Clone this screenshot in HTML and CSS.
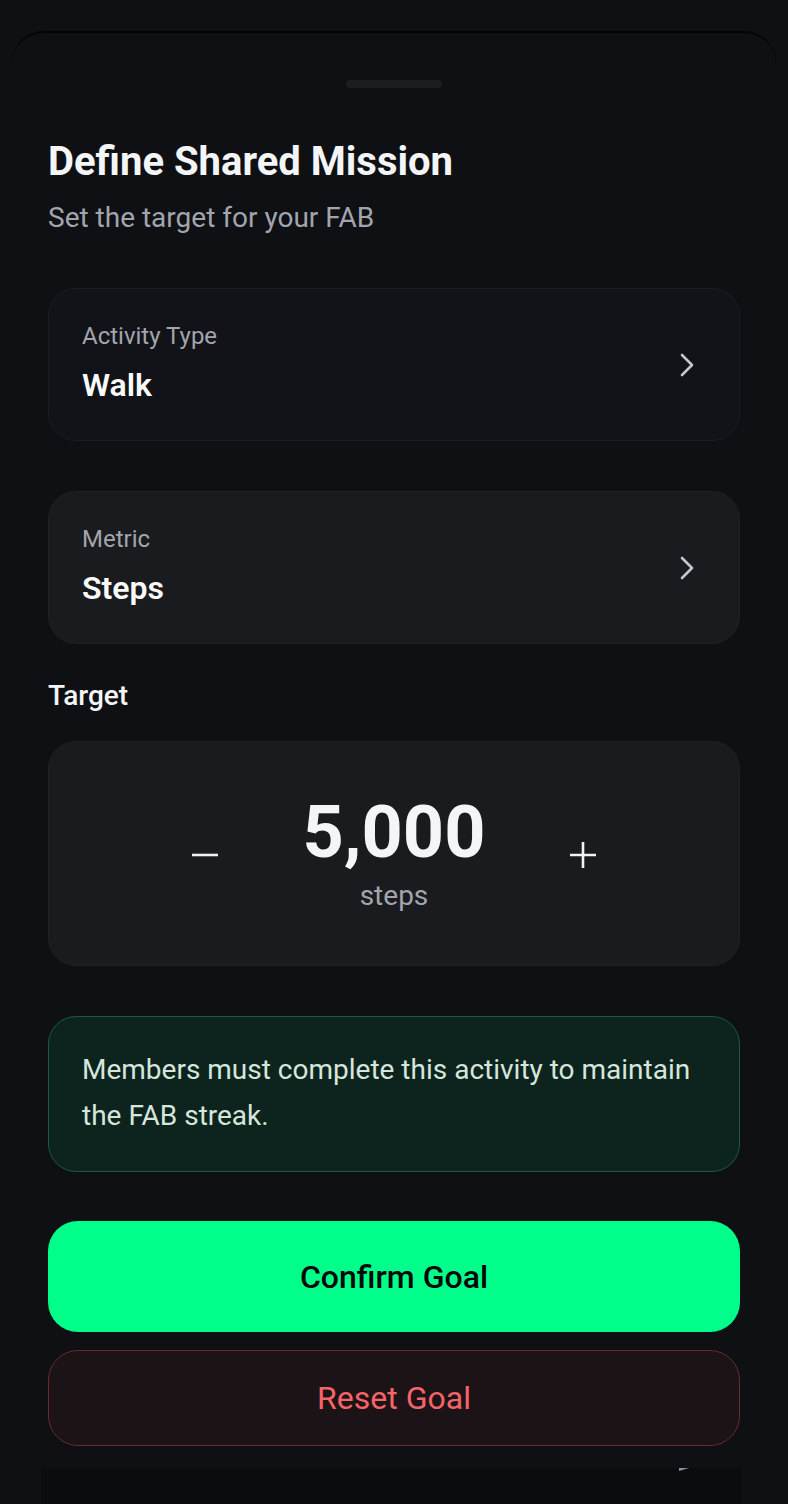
FILE: index.html
```html
<!DOCTYPE html>
<html lang="en">
<head>
    <meta charset="UTF-8">
    <meta name="viewport" content="width=device-width, initial-scale=1.0">
    <title>Define Shared Mission</title>
    <link rel="stylesheet" href="styles.css">
</head>
<body>
    <div class="sheet">
        <div class="handle"></div>

        <h1>Define Shared Mission</h1>
        <p class="subtitle">Set the target for your FAB</p>

        <div class="picker picker-dark">
            <div class="picker-text">
                <span class="picker-label">Activity Type</span>
                <span class="picker-value">Walk</span>
            </div>
            <svg class="chevron" width="16" height="26" viewBox="0 0 16 26">
                <path d="M3 3 L13 13 L3 23" fill="none" stroke="#c4c6cc" stroke-width="2.6" stroke-linecap="round" stroke-linejoin="round"/>
            </svg>
        </div>

        <div class="picker">
            <div class="picker-text">
                <span class="picker-label">Metric</span>
                <span class="picker-value">Steps</span>
            </div>
            <svg class="chevron" width="16" height="26" viewBox="0 0 16 26">
                <path d="M3 3 L13 13 L3 23" fill="none" stroke="#c4c6cc" stroke-width="2.6" stroke-linecap="round" stroke-linejoin="round"/>
            </svg>
        </div>

        <h2 class="section-label">Target</h2>

        <div class="target">
            <button class="step-btn" aria-label="Decrease">
                <svg width="28" height="28" viewBox="0 0 28 28">
                    <path d="M1 14 H27" stroke="#f2f3f5" stroke-width="2.6"/>
                </svg>
            </button>
            <div class="target-value">
                <span class="target-number">5,000</span>
                <span class="target-unit">steps</span>
            </div>
            <button class="step-btn" aria-label="Increase">
                <svg width="28" height="28" viewBox="0 0 28 28">
                    <path d="M1 14 H27 M14 1 V27" stroke="#f2f3f5" stroke-width="2.6"/>
                </svg>
            </button>
        </div>

        <div class="notice">
            Members must complete this activity to maintain the FAB streak.
        </div>

        <button class="btn btn-confirm">Confirm Goal</button>
        <button class="btn btn-reset">Reset Goal</button>
    </div>
    <div class="bottom-bar">
        <span class="bar-mark"></span>
    </div>
</body>
</html>
```

FILE: styles.css
```css
body {
    font-family: Roboto, "Noto Sans", Arial, sans-serif;
    margin: 0;
    padding: 0;
    background-color: #0e1014;
    color: #f4f5f7;
    height: 1504px;
    overflow: hidden;
}
.sheet {
    margin: 31px 12px 0;
    padding: 0 36px;
    height: 1437px;
    box-sizing: border-box;
    border-top: 2px solid #030406;
    border-radius: 32px 32px 0 0;
    background-color: #0e1014;
    display: flex;
    flex-direction: column;
}
.handle {
    width: 96px;
    height: 8px;
    border-radius: 4px;
    background-color: #1c1d21;
    margin: 47px auto 0;
}
h1 {
    margin: 50px 0 0;
    font-size: 40px;
    font-weight: 700;
    line-height: 48px;
}
.subtitle {
    margin: 15px 0 0;
    font-size: 28px;
    line-height: 34px;
    color: #a2a5ad;
}
.picker {
    margin-top: 53px;
    height: 153px;
    box-sizing: border-box;
    padding: 0 44px 4px 33px;
    border-radius: 28px;
    border: 1px solid #202125;
    background-color: #1a1b1e;
    display: flex;
    align-items: center;
    justify-content: space-between;
}
.picker + .picker {
    margin-top: 50px;
}
.picker-dark {
    background-color: #111318;
    border-color: #1b1d21;
}
.picker-text {
    display: flex;
    flex-direction: column;
    gap: 15px;
}
.picker-label {
    font-size: 24px;
    line-height: 30px;
    color: #a2a5ad;
}
.picker-value {
    font-size: 32px;
    line-height: 38px;
    font-weight: 600;
    color: #fafafa;
}
.chevron {
    display: block;
    margin-top: 4px;
}
.section-label {
    margin: 35px 0 0;
    font-size: 28px;
    line-height: 34px;
    font-weight: 500;
}
.target {
    margin-top: 28px;
    height: 225px;
    box-sizing: border-box;
    border-radius: 28px;
    border: 1px solid #202125;
    background-color: #1a1b1e;
    display: flex;
    align-items: center;
    justify-content: center;
    gap: 80px;
}
.step-btn {
    background: none;
    border: none;
    padding: 0;
    width: 28px;
    height: 28px;
    margin-top: 2px;
}
.step-btn svg {
    display: block;
}
.target-value {
    display: flex;
    flex-direction: column;
    align-items: center;
    width: 190px;
}
.target-number {
    font-size: 72px;
    line-height: 76px;
    font-weight: 700;
    color: #f4f5f7;
}
.target-unit {
    font-size: 28px;
    line-height: 32px;
    margin-top: 9px;
    color: #a2a5ad;
}
.notice {
    margin-top: 50px;
    padding: 30px 33px 32px;
    border-radius: 28px;
    border: 1px solid #1d5a3f;
    background-color: #0d241e;
    font-size: 28px;
    line-height: 46px;
    color: #d6e6dc;
}
.btn {
    font-family: inherit;
    display: block;
    width: 100%;
    border-radius: 30px;
    font-size: 32px;
    font-weight: 500;
    cursor: pointer;
}
.btn-confirm {
    margin-top: 49px;
    height: 111px;
    border: none;
    background-color: #00fe8a;
    color: #050807;
}
.btn-reset {
    margin-top: 18px;
    height: 96px;
    border: 1px solid #6a2a30;
    background-color: #1c1316;
    color: #f56468;
    font-weight: 400;
}
.bottom-bar {
    position: absolute;
    left: 41px;
    right: 46px;
    top: 1468px;
    height: 36px;
    background-color: #0b0c0f;
}
.bar-mark {
    position: absolute;
    left: 638px;
    top: 0;
    width: 0;
    height: 0;
    border-top: 3px solid #8c8e94;
    border-right: 10px solid transparent;
}
```
